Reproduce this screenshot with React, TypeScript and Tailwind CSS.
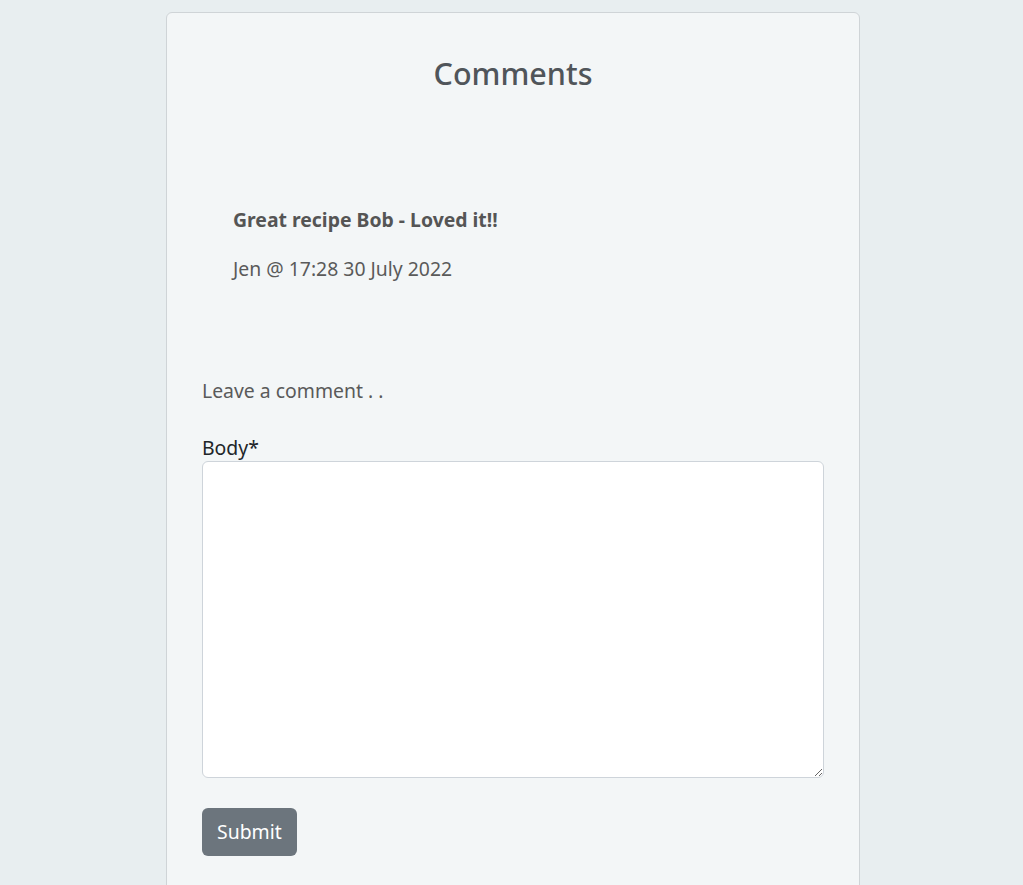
import React from "react";

const comments = [
  { body: "Great recipe Bob - Loved it!!", author: "Jen", when: "17:28 30 July 2022" },
];

export default function App() {
  return (
    <div
      className="min-h-[885px] bg-[#e8eef0] flex justify-center pt-3 text-[19.4px] text-[#555]"
      style={{ fontFamily: '"Noto Sans", sans-serif' }}
    >
      <div className="w-[694px] ml-[3px] bg-[#f3f6f7] border border-[#cfd4d7] rounded-md px-[35px] pt-[33px] pb-10">
        <h2 className="text-center text-[30.5px] font-medium leading-[54px] text-[#50555a]">Comments</h2>
        <div className="pt-[106px] pl-[31px] pb-[95px]">
          {comments.map((c) => (
            <div key={c.body}>
              <p className="font-bold leading-[27px] text-[#555]">{c.body}</p>
              <p className="mt-[22px] leading-[27px] text-[#5a5a5a]">
                {c.author} @ {c.when}
              </p>
            </div>
          ))}
        </div>
        <p className="leading-[27px] text-[#5a5a5a]">Leave a comment . .</p>
        <form className="mt-[31px]">
          <label className="block leading-[26px] text-[#212529]">Body*</label>
          <textarea className="block w-full h-[317px] bg-white border border-[#ced4da] rounded-md" />
          <button
            type="button"
            className="mt-[30px] h-12 px-[15px] bg-[#6c757d] text-white rounded-md"
          >
            Submit
          </button>
        </form>
      </div>
    </div>
  );
}
